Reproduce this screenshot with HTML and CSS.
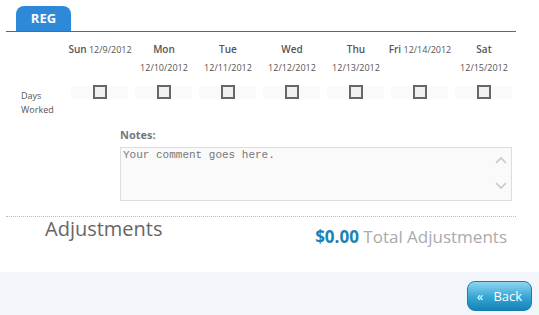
FILE: index.html
```html
<!DOCTYPE html>
<html>
<head>
  <title>Timesheet</title>
  <link rel="stylesheet" href="styles.css">
</head>
<body>
  <div class="sheet">
    <div class="tabs">
      <div class="tab">REG</div>
    </div>

    <div class="week">
      <div class="cell label-cell"></div>
      <div class="cell head"><b>Sun</b> <span>12/9/2012</span></div>
      <div class="cell head"><b>Mon</b><br><span>12/10/2012</span></div>
      <div class="cell head"><b>Tue</b><br><span>12/11/2012</span></div>
      <div class="cell head"><b>Wed</b><br><span>12/12/2012</span></div>
      <div class="cell head"><b>Thu</b><br><span>12/13/2012</span></div>
      <div class="cell head"><b>Fri</b> <span>12/14/2012</span></div>
      <div class="cell head"><b>Sat</b><br><span>12/15/2012</span></div>

      <div class="cell row-label">Days<br>Worked</div>
      <div class="cell day"><span class="box"></span></div>
      <div class="cell day"><span class="box"></span></div>
      <div class="cell day"><span class="box"></span></div>
      <div class="cell day"><span class="box"></span></div>
      <div class="cell day"><span class="box"></span></div>
      <div class="cell day"><span class="box"></span></div>
      <div class="cell day"><span class="box"></span></div>
    </div>

    <div class="notes">
      <label for="notes">Notes:</label>
      <div class="note-wrap">
        <textarea id="notes" placeholder="Your comment goes here."></textarea>
        <span class="arrows">
          <svg width="12" height="36" viewBox="0 0 12 36">
            <path d="M1 8 L6 3 L11 8" fill="none" stroke="#c8c8c8" stroke-width="1.6"/>
            <path d="M1 28 L6 33 L11 28" fill="none" stroke="#c8c8c8" stroke-width="1.6"/>
          </svg>
        </span>
      </div>
    </div>

    <div class="adjust">
      <h2>Adjustments</h2>
      <p class="total"><b>$0.00</b> Total Adjustments</p>
    </div>
  </div>

  <div class="footer">
    <button class="back">&laquo;&nbsp;&nbsp; Back</button>
  </div>
</body>
</html>
```

FILE: styles.css
```css
/* page */
body {
  margin: 0;
  background-color: #fff;
  font-family: "Open Sans", Arial, sans-serif;
  color: #555;
}

.sheet {
  padding: 6px 23px 0 6px;
  height: 266px;
}

/* tab strip */
.tabs {
  border-bottom: 1px solid #666;
  padding-left: 10px;
}

.tab {
  width: 55px;
  height: 25px;
  line-height: 25px;
  background-color: #2e8ad8;
  border-radius: 8px 8px 0 0;
  color: #fff;
  font-weight: bold;
  font-size: 13px;
  text-align: center;
}

/* week grid */
.week {
  display: grid;
  grid-template-columns: 62px repeat(7, 64px);
  margin-top: 8px;
}

.head {
  text-align: center;
  font-size: 9px;
  line-height: 18px;
  height: 46px;
}

.head b {
  font-size: 10px;
  font-weight: 600;
}

.row-label {
  font-size: 9px;
  line-height: 14px;
  padding: 3px 0 0 15px;
  color: #555;
}

.day {
  display: flex;
  justify-content: center;
  align-items: flex-start;
}

.day .box {
  display: flex;
  justify-content: center;
  width: 57px;
  height: 13px;
  background-color: #fafafa;
  margin-left: -1px;
}

.day .box::after {
  content: "";
  width: 10px;
  height: 10px;
  border: 2px solid #666;
  background-color: #f0f0f0;
  margin-top: -1px;
}

/* notes */
.notes {
  margin: 10px 0 0 114px;
}

.notes label {
  display: block;
  font-size: 11px;
  font-weight: bold;
  color: #777;
  margin-bottom: 5px;
}

.note-wrap {
  position: relative;
  width: 392px;
}

.note-wrap textarea {
  display: block;
  box-sizing: border-box;
  width: 392px;
  height: 54px;
  border: 1px solid #ddd;
  background-color: #fafafa;
  resize: none;
  overflow: hidden;
  padding: 1px 2px;
  font-family: "Liberation Mono", "Courier New", monospace;
  font-size: 11px;
  color: #777;
}

.note-wrap textarea::placeholder {
  color: #777;
}

.arrows {
  position: absolute;
  right: 5px;
  top: 8px;
}

/* adjustments */
.adjust {
  display: flex;
  justify-content: space-between;
  margin-top: 15px;
  border-top: 1px dotted #bbb;
  padding: 0 9px 0 39px;
}

.adjust h2 {
  margin: 0;
  font-size: 20px;
  font-weight: normal;
  color: #666;
  line-height: 24px;
}

.total {
  margin: 8px 0 0;
  font-size: 17px;
  color: #aaa;
  line-height: 24px;
}

.total b {
  color: #1a83b6;
}

/* footer */
.footer {
  background-color: #f2f6fa;
  height: 49px;
  display: flex;
  justify-content: flex-end;
  padding: 9px 7px 0 0;
  box-sizing: border-box;
}

.back {
  width: 65px;
  height: 30px;
  border: 1px solid #1a7fae;
  border-radius: 8px;
  background: linear-gradient(#8ed6f2, #34a5d4 55%, #1683b6);
  color: #fff;
  font-family: "Open Sans", Arial, sans-serif;
  font-size: 13px;
  cursor: pointer;
  padding: 0;
}
```
